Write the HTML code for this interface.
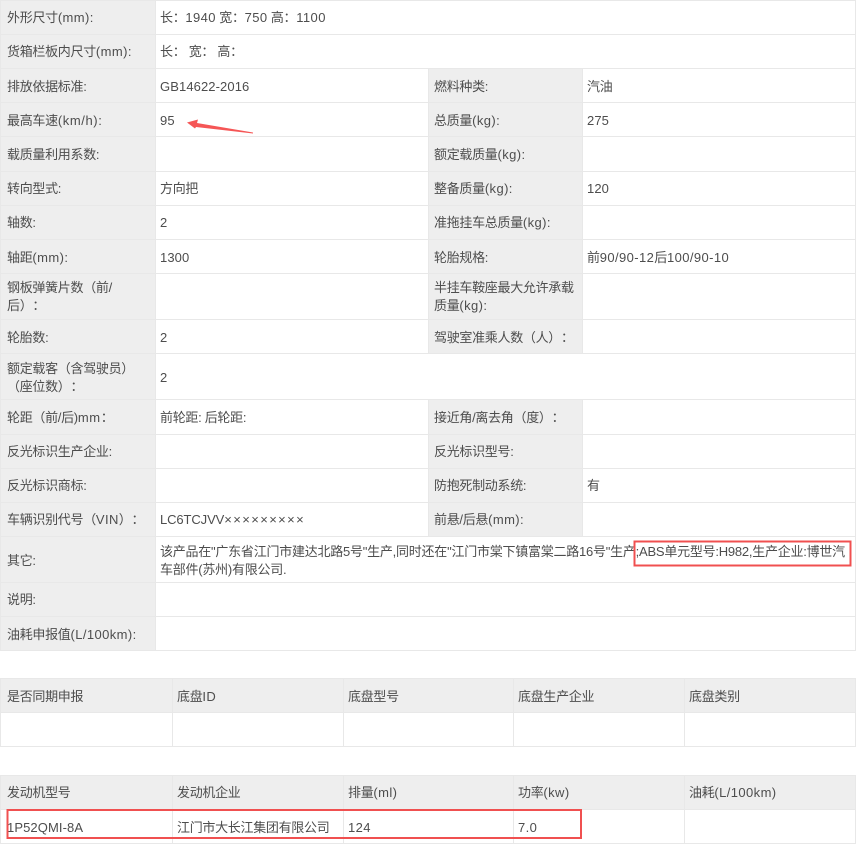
<!DOCTYPE html>
<html lang="zh-CN">
<head>
<meta charset="utf-8">
<title>车辆参数</title>
<style>
html,body{margin:0;padding:0;background:#fff;}
body{position:relative;width:856px;height:843px;overflow:hidden;font-family:"Liberation Sans","Noto Sans CJK SC",sans-serif;font-size:13px;line-height:18px;color:#4d4d4d;text-spacing-trim:space-all;}
table{position:absolute;left:0;border-collapse:collapse;table-layout:fixed;width:855px;}
td{border:1px solid #e8e8e8;padding:0 0 0 5px;vertical-align:middle;overflow:hidden;box-sizing:border-box;letter-spacing:-.3px;white-space:nowrap;}
.t2 td,.t3 td{padding-left:4px;}
td:first-child,.t2 td:first-child,.t3 td:first-child{padding-left:6px;}
td.l{background:#eee;}
td.v{padding-left:4px;}
tr.s td{padding-top:2px;}
.a{letter-spacing:.4px;}
.k{letter-spacing:.6px;}
.n{letter-spacing:.1px;}
.x{letter-spacing:1.4px;}
.m{letter-spacing:-.1px;}
.t1{top:0;}
.t2{top:678px;}
.t3{top:775px;}
.t2 td,.t3 td{height:34px;}
.h td{background:#eee;}
svg{position:absolute;left:0;top:0;}
</style>
</head>
<body>
<table class="t1">
<colgroup><col style="width:155px"><col style="width:273px"><col style="width:154px"><col style="width:273px"></colgroup>
<tr style="height:34px"><td class="l">外形尺寸<span class="a">(mm):</span></td><td class="v" colspan="3">长：<span class="a">1940</span> 宽：<span class="a">750</span> 高：<span class="a">1100</span></td></tr>
<tr style="height:34px"><td class="l">货箱栏板内尺寸<span class="a">(mm):</span></td><td class="v" colspan="3">长： 宽： 高：</td></tr>
<tr class="s" style="height:34px"><td class="l">排放依据标准:</td><td class="v"><span class="n">GB14622-2016</span></td><td class="l">燃料种类:</td><td class="v">汽油</td></tr>
<tr class="s" style="height:34px"><td class="l">最高车速<span class="k">(km/h):</span></td><td class="v"><span class="n">95</span></td><td class="l">总质量<span class="a">(kg):</span></td><td class="v"><span class="n">275</span></td></tr>
<tr class="s" style="height:35px"><td class="l">载质量利用系数:</td><td class="v"></td><td class="l">额定载质量<span class="a">(kg):</span></td><td class="v"></td></tr>
<tr style="height:34px"><td class="l">转向型式:</td><td class="v">方向把</td><td class="l">整备质量<span class="a">(kg):</span></td><td class="v"><span class="n">120</span></td></tr>
<tr style="height:34px"><td class="l">轴数:</td><td class="v"><span class="n">2</span></td><td class="l">准拖挂车总质量<span class="a">(kg):</span></td><td class="v"></td></tr>
<tr class="s" style="height:34px"><td class="l">轴距<span class="a">(mm):</span></td><td class="v"><span class="n">1300</span></td><td class="l">轮胎规格:</td><td class="v">前<span class="a">90/90-12</span>后<span class="a">100/90-10</span></td></tr>
<tr style="height:46px"><td class="l">钢板弹簧片数（前/<br>后）：</td><td class="v"></td><td class="l">半挂车鞍座最大允许承载<br>质量<span class="a">(kg):</span></td><td class="v"></td></tr>
<tr class="s" style="height:34px"><td class="l">轮胎数:</td><td class="v"><span class="n">2</span></td><td class="l">驾驶室准乘人数（人）：</td><td class="v"></td></tr>
<tr class="s" style="height:46px"><td class="l">额定载客（含驾驶员）<br>（座位数）：</td><td class="v" colspan="3"><span class="n">2</span></td></tr>
<tr class="s" style="height:35px"><td class="l">轮距（前/后)<span class="k">mm</span>：</td><td class="v">前轮距: 后轮距:</td><td class="l">接近角/离去角（度）：</td><td class="v"></td></tr>
<tr style="height:34px"><td class="l">反光标识生产企业:</td><td class="v"></td><td class="l">反光标识型号:</td><td class="v"></td></tr>
<tr style="height:34px"><td class="l">反光标识商标:</td><td class="v"></td><td class="l">防抱死制动系统:</td><td class="v">有</td></tr>
<tr style="height:34px"><td class="l">车辆识别代号（<span class="a">VIN</span>）：</td><td class="v"><span class="m">LC6TCJVV</span><span class="x">×××××××××</span></td><td class="l">前悬/后悬<span class="a">(mm):</span></td><td class="v"></td></tr>
<tr class="s" style="height:46px"><td class="l">其它:</td><td class="v" colspan="3" style="letter-spacing:-.24px">该产品在"广东省江门市建达北路5号"生产,同时还在"江门市棠下镇富棠二路16号"生产;ABS单元型号:H982,生产企业:博世汽<br>车部件(苏州)有限公司.</td></tr>
<tr style="height:34px"><td class="l">说明:</td><td class="v" colspan="3"></td></tr>
<tr class="s" style="height:34px"><td class="l">油耗申报值<span class="a">(L/100km):</span></td><td class="v" colspan="3"></td></tr>
</table>
<table class="t2">
<colgroup><col style="width:172px"><col style="width:171px"><col style="width:170px"><col style="width:171px"><col style="width:171px"></colgroup>
<tr class="h s"><td>是否同期申报</td><td>底盘<span class="a">ID</span></td><td>底盘型号</td><td>底盘生产企业</td><td>底盘类别</td></tr>
<tr><td></td><td></td><td></td><td></td><td></td></tr>
</table>
<table class="t3">
<colgroup><col style="width:172px"><col style="width:171px"><col style="width:170px"><col style="width:171px"><col style="width:171px"></colgroup>
<tr class="h"><td>发动机型号</td><td>发动机企业</td><td>排量<span class="a">(ml)</span></td><td>功率<span class="a">(kw)</span></td><td>油耗<span class="a">(L/100km)</span></td></tr>
<tr class="s"><td><span class="n">1P52QMI-8A</span></td><td style="letter-spacing:-.3px">江门市大长江集团有限公司</td><td><span class="a">124</span></td><td><span class="a">7.0</span></td><td></td></tr>
</table>
<svg width="856" height="843" viewBox="0 0 856 843" fill="none">
<polygon points="187,122.5 198,119.5 197,123 253,132.5 253,133.5 196,127 195,128.5" fill="#f55656"/>
<rect x="634.5" y="541.5" width="216" height="24" stroke="#f05050" stroke-width="2"/>
<rect x="7.5" y="810" width="573.5" height="28" stroke="#f05050" stroke-width="2"/>
</svg>
</body>
</html>
